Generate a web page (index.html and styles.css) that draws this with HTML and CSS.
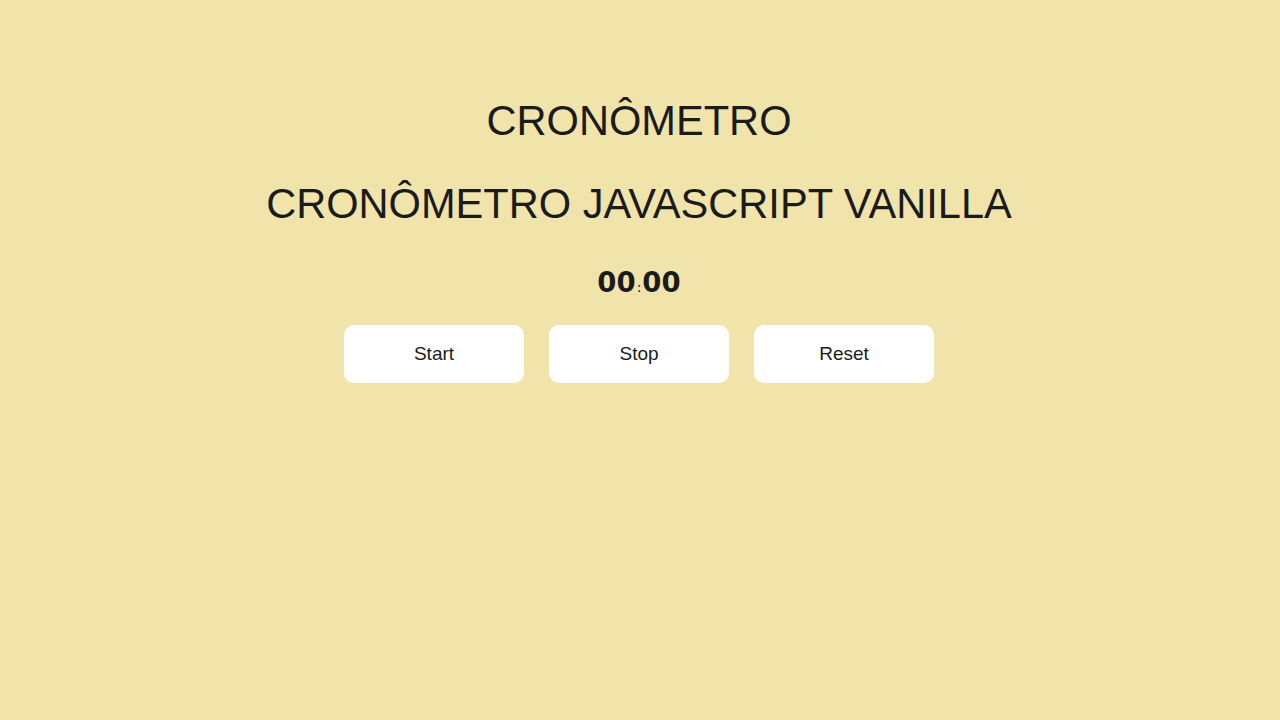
FILE: index.html
```html
<!DOCTYPE html>
<html lang="pt-BR">
<head>
<meta charset="utf-8">
<title>Cronômetro</title>
<link rel="stylesheet" href="styles.css">
</head>
<body>
<main class="wrapper">
  <h1 class="title">CRONÔMETRO</h1>
  <h2 class="subtitle">CRONÔMETRO JAVASCRIPT VANILLA</h2>
  <p class="timer"><span class="digits">00</span><span class="colon">:</span><span class="digits">00</span></p>
  <div class="controls">
    <button class="btn">Start</button>
    <button class="btn">Stop</button>
    <button class="btn">Reset</button>
  </div>
</main>
</body>
</html>
```
FILE: styles.css
```css
html, body {
  margin: 0;
  padding: 0;
}
body {
  background: #f1e4ab;
  color: #1b1b1b;
  font-family: "Liberation Sans", Arial, sans-serif;
  min-height: 720px;
}
.wrapper {
  display: flex;
  flex-direction: column;
  align-items: center;
  padding-top: 97px;
  padding-right: 2px;
}
.title, .subtitle {
  margin: 0;
  font-weight: 400;
  font-size: 41.6px;
  line-height: 48px;
}
.subtitle {
  margin-top: 35px;
}
.timer {
  margin: 34px 0 0;
  font-family: "DejaVu Sans", sans-serif;
  font-weight: 700;
  font-size: 27.5px;
  line-height: 40px;
}
.colon {
  font-size: 14px;
  font-weight: 400;
  margin: 0 1px;
}
.controls {
  display: flex;
  gap: 25px;
  margin-top: 18px;
}
.btn {
  width: 180px;
  height: 58px;
  padding: 0;
  border: none;
  border-radius: 10px;
  background: #fff;
  color: #1b1b1b;
  font-family: "Liberation Sans", Arial, sans-serif;
  font-size: 19px;
}
```
